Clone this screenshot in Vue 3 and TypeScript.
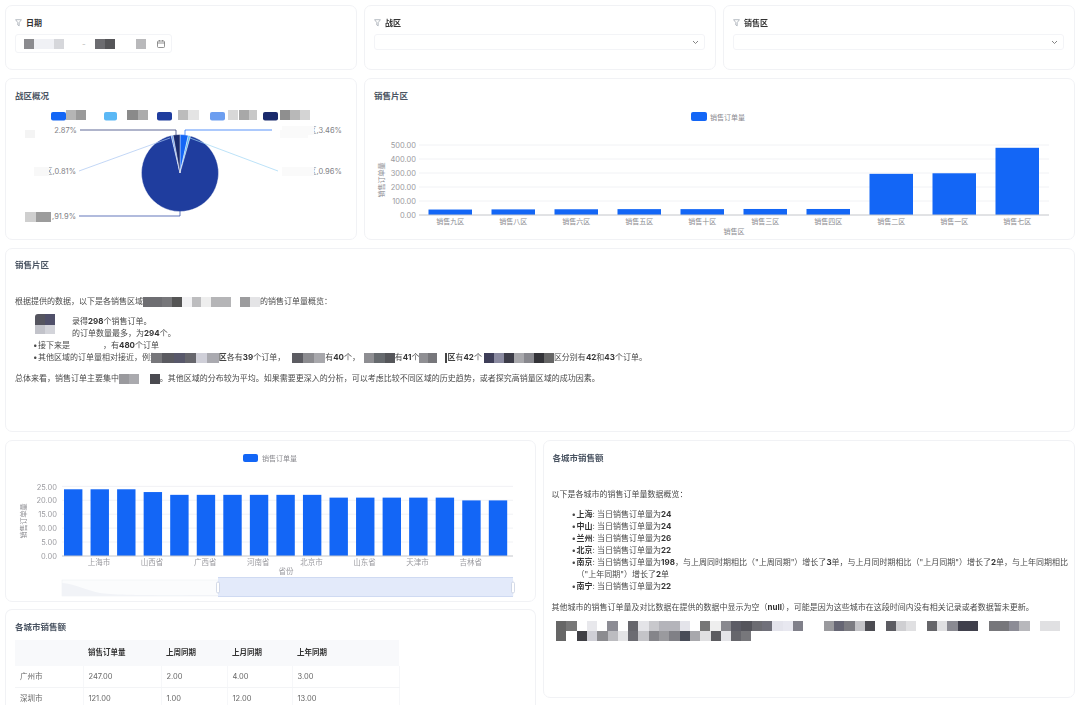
<script setup lang="ts">
const blue = '#1366f6'
const band = (colors: string[], cell: number) => {
  const stops = colors.map((c, i) => `${c} ${i * cell}px ${(i + 1) * cell}px`).join(',')
  return { width: `${colors.length * cell}px`, background: `linear-gradient(90deg,${stops})` }
}

const areaBars = [39, 40, 41, 42, 42, 43, 43, 294, 298, 480].map((v, i) => ({
  x: 428.5 + i * 63,
  h: (v / 500) * 70,
  label: ['销售九区', '销售八区', '销售六区', '销售五区', '销售十区', '销售三区', '销售四区', '销售二区', '销售一区', '销售七区'][i],
}))
const areaTicks = ['0.00', '100.00', '200.00', '300.00', '400.00', '500.00']
const cityBars = [24, 24, 24, 23, 22, 22, 22, 22, 22, 22, 21, 21, 21, 21, 21, 20, 20].map((v, i) => ({
  x: 64 + i * 26.55,
  h: (v / 25) * 69.5,
}))
const cityTicks = ['0.00', '5.00', '10.00', '15.00', '20.00', '25.00']
const cityLabels = ['上海市', '山西省', '广西省', '河南省', '北京市', '山东省', '天津市', '吉林省']

const cx = 180
const cy = 173
const r = 38.5
const pt = (deg: number) => {
  const a = (deg * Math.PI) / 180
  return `${(cx + r * Math.sin(a)).toFixed(2)} ${(cy - r * Math.cos(a)).toFixed(2)}`
}
const slices = (() => {
  const data = [
    [3.46, blue],
    [0.96, '#5bb8f5'],
    [91.9, '#1f3d9e'],
    [0.81, '#6c9ef0'],
    [2.87, '#1a2a6c'],
  ] as [number, string][]
  let start = 0
  return data.map(([v, fill]) => {
    const sweep = (v / 100) * 360
    const d = `M${cx} ${cy}L${pt(start)}A${r} ${r} 0 ${sweep > 180 ? 1 : 0} 1 ${pt(start + sweep)}Z`
    start += sweep
    return { d, fill }
  })
})()

const legend = [
  { x: 51, w: 15, fill: blue },
  { x: 104, w: 13, fill: '#5bb8f5' },
  { x: 157, w: 15, fill: '#1f3d9e' },
  { x: 210, w: 15, fill: '#6c9ef0' },
  { x: 263, w: 15, fill: '#1a2a6c' },
]
const legendBlur = [
  { x: 66, w: 10, fill: '#b5b5b5' }, { x: 76, w: 10, fill: '#9a9a9a' },
  { x: 127, w: 11, fill: '#8a8a8a' }, { x: 138, w: 10, fill: '#acacac' },
  { x: 178, w: 10, fill: '#bcbcbc' }, { x: 188, w: 11, fill: '#e4e4e4' },
  { x: 228, w: 10, fill: '#d8d8d8' }, { x: 239, w: 10, fill: '#a8a8a8' }, { x: 249, w: 8, fill: '#c8c8c8' },
  { x: 280, w: 10, fill: '#8f8f8f' }, { x: 290, w: 10, fill: '#b8b8b8' }, { x: 300, w: 10, fill: '#d4d4d4' },
]

const rows = [
  ['广州市', '247.00', '2.00', '4.00', '3.00'],
  ['深圳市', '121.00', '1.00', '12.00', '13.00'],
]
const cities = [
  ['上海', '24'],
  ['中山', '24'],
  ['兰州', '26'],
  ['北京', '22'],
]
</script>

<template>
  <div class="page">
    <section class="card filter">
      <div class="fhead">
        <svg width="7" height="8" viewBox="0 0 7 8"><path d="M.6.7h5.8L4.2 3.6v3.2L2.8 6V3.6z" fill="none" stroke="#9aa0aa" stroke-width=".7" /></svg>
        <b>日期</b>
      </div>
      <div class="date">
        <span class="mos" :style="band(['#8b8b8f', '#f0f1f5', '#f0f1f5', '#d6d7db'], 10)"></span>
        <span class="dash">-</span>
        <span class="mos" :style="band(['#6c6c70', '#555558'], 10)"></span>
        <span class="mos far" :style="band(['#b9b9bb'], 10)"></span>
        <svg class="cal" width="8" height="8" viewBox="0 0 8 8"><rect x=".5" y="1" width="7" height="6.5" rx="1" fill="none" stroke="#777" stroke-width=".8" /><path d="M.5 3h7M2.4 0v1.4M5.6 0v1.4" stroke="#777" stroke-width=".8" /></svg>
      </div>
    </section>
    <section class="card filter">
      <div class="fhead">
        <svg width="7" height="8" viewBox="0 0 7 8"><path d="M.6.7h5.8L4.2 3.6v3.2L2.8 6V3.6z" fill="none" stroke="#9aa0aa" stroke-width=".7" /></svg>
        <b>战区</b>
      </div>
      <div class="select">
        <svg width="7" height="5" viewBox="0 0 7 5"><path d="M1 1l2.5 2.5L6 1" fill="none" stroke="#777" stroke-width=".9" /></svg>
      </div>
    </section>
    <section class="card filter">
      <div class="fhead">
        <svg width="7" height="8" viewBox="0 0 7 8"><path d="M.6.7h5.8L4.2 3.6v3.2L2.8 6V3.6z" fill="none" stroke="#9aa0aa" stroke-width=".7" /></svg>
        <b>销售区</b>
      </div>
      <div class="select">
        <svg width="7" height="5" viewBox="0 0 7 5"><path d="M1 1l2.5 2.5L6 1" fill="none" stroke="#777" stroke-width=".9" /></svg>
      </div>
    </section>

    <section class="card chart-row">
      <h3 class="title">战区概况</h3>
      <svg class="plot" width="350" height="137" viewBox="6 102 350 137">
        <rect v-for="l in legend" :key="l.x" :x="l.x" y="112" :width="l.w" height="8.5" rx="2" :fill="l.fill" />
        <rect v-for="l in legendBlur" :key="l.x" :x="l.x" y="110" :width="l.w" height="10" :fill="l.fill" />
        <path v-for="s in slices" :key="s.fill" :d="s.d" :fill="s.fill" stroke="#fff" stroke-width=".4" />
        <path d="M80 130H176V135" fill="none" stroke="#1a2a6c" stroke-width=".7" />
        <path d="M272 130H185V135" fill="none" stroke="#1366f6" stroke-width=".7" />
        <path d="M79 171L170 138" fill="none" stroke="#a9c6f2" stroke-width=".7" />
        <path d="M278 171L190 138" fill="none" stroke="#9fd6f5" stroke-width=".7" />
        <path d="M79 216H180V211" fill="none" stroke="#1f3d9e" stroke-width=".7" />
        <rect x="25" y="212" width="11" height="10" fill="#cfcfcf" /><rect x="36" y="212" width="15" height="10" fill="#9c9c9c" />
        <rect x="25" y="130" width="10" height="8" fill="#f4f4f4" /><rect x="280" y="130" width="28" height="8" fill="#fafafa" />
        <text x="77" y="133" class="pl end">2.87%</text>
        <text x="76" y="174" class="pl end">区,0.81%</text>
        <text x="76" y="219" class="pl end">,91.9%</text>
        <text x="309" y="133" class="pl">区,3.46%</text>
        <text x="309" y="174" class="pl">区,0.96%</text>
        <rect x="34" y="167" width="15" height="9" fill="#f8f8f8" />
        <rect x="282" y="126" width="32" height="9" fill="#fafafa" />
        <rect x="282" y="167" width="32" height="9" fill="#fafafa" />
      </svg>
    </section>

    <section class="card chart-row wide">
      <h3 class="title">销售片区</h3>
      <svg class="plot" width="709" height="137" viewBox="365 102 709 137">
        <rect x="691" y="112" width="16" height="9" rx="2" :fill="blue" />
        <text x="710" y="119.5" class="ax">销售订单量</text>
        <line v-for="(t, i) in areaTicks.slice(1)" :key="t" x1="419" x2="1049" :y1="201 - i * 14" :y2="201 - i * 14" stroke="#edeff2" stroke-width=".8" />
        <text v-for="(t, i) in areaTicks" :key="t" x="416" :y="218 - i * 14" class="tk end">{{ t }}</text>
        <text class="ax mid" transform="translate(384 180) rotate(-90)">销售订单量</text>
        <rect v-for="b in areaBars" :key="b.x" :x="b.x" :y="215 - b.h" width="43.5" :height="b.h" :fill="blue" />
        <line x1="419" x2="1049" y1="215" y2="215" stroke="#c4c6cb" />
        <text v-for="b in areaBars" :key="b.label" :x="b.x + 21.7" y="224" class="ax mid">{{ b.label }}</text>
        <text x="734" y="234" class="ax mid">销售区</text>
      </svg>
    </section>

    <section class="card summary">
      <h3 class="title">销售片区</h3>
      <p class="first">根据提供的数据，以下是各销售区域<span class="mos" :style="band(['#6e6e72', '#6e6e72', '#77777a', '#555', '#f2f2f4', '#bdbdbf', '#eee', '#b5b5b7', '#b5b5b7', '#fff', '#9c9c9e', '#e4e4e6'], 9.75)"></span>的销售订单量概览：</p>
      <ul class="list">
        <li class="skip">录得<b>298</b>个销售订单。</li>
        <li class="skip">的订单数量最多，为<b>294</b>个。</li>
        <li class="dot">接下来是<span class="gap"></span>，有<b>480</b>个订单</li>
        <li class="dot">其他区域的订单量相对接近，例如<span class="mos back7" :style="band(['#77777b', '#5a5a60', '#58586a', '#66666c', '#cfcfd8', '#aaaab0'], 11.3)"></span><b class="pl-b">区</b>各有<b>39</b>个订单，<span class="mos ml7" :style="band(['#5c5c62', '#8c8c90', '#a8a8ac'], 11)"></span>有<b>40</b>个，<span class="mos ml4" :style="band(['#8e8e92', '#666a6e', '#55565a'], 10.3)"></span>有<b>41</b>个<span class="mos" :style="band(['#8f8f93', '#77777b'], 9)"></span><span class="mos ml8 thin"></span><b class="pl-b">区</b>有<b>42</b>个<span class="mos ml2" :style="band(['#3e3e58', '#8a8aa0', '#3c3c48', '#a8a8ac', '#88888e', '#333338', '#666'], 10)"></span>区分别有<b>42</b>和<b>43</b>个订单。</li>
        <li class="block" aria-hidden="true"></li>
      </ul>
      <p class="last">总体来看，销售订单主要集中<span class="mos" :style="band(['#9a9a9e', '#aaaaae', '#fff', '#4a4a50'], 10.2)"></span>。其他区域的分布较为平均。如果需要更深入的分析，可以考虑比较不同区域的历史趋势，或者探究高销量区域的成功因素。</p>
    </section>

    <div class="bottom">
      <div class="leftcol">
        <section class="card city">
          <svg class="plot" width="529" height="160" viewBox="6 442 529 160">
            <rect x="243" y="455" width="15" height="8" rx="2" :fill="blue" />
            <text x="262" y="462" class="ax">销售订单量</text>
            <line v-for="(t, i) in cityTicks.slice(1)" :key="t" x1="62" x2="513" :y1="543 - i * 13.9" :y2="543 - i * 13.9" stroke="#edeff2" stroke-width=".8" />
            <text v-for="(t, i) in cityTicks" :key="t" x="57" :y="560 - i * 13.9" class="tk end">{{ t }}</text>
            <text class="ax mid" transform="translate(26 522) rotate(-90)">销售订单量</text>
            <rect v-for="b in cityBars" :key="b.x" :x="b.x" :y="557 - b.h" width="18.4" :height="b.h" :fill="blue" />
            <line x1="62" x2="513" y1="557" y2="557" stroke="#c4c6cb" />
            <text v-for="(c, i) in cityLabels" :key="c" :x="99 + i * 53.1" y="566" class="ax mid big">{{ c }}</text>
            <text x="286" y="575" class="ax mid big">省份</text>
            <rect x="62" y="581" width="451" height="16" fill="#fbfcfd" stroke="#eef0f4" stroke-width=".6" />
            <path d="M62 584C75 585 85 591 100 594S190 596 218 596V597H62Z" fill="#f1f3f7" />
            <rect x="218" y="578" width="295" height="20" fill="#e3eafa" />
            <line x1="218" x2="513" y1="578.5" y2="578.5" stroke="#cfdaf2" />
            <line x1="218" x2="513" y1="597.5" y2="597.5" stroke="#cfdaf2" />
            <rect x="216.5" y="583" width="3" height="11" rx="1.5" fill="#fff" stroke="#b9c3d8" stroke-width=".6" />
            <rect x="511.5" y="583" width="3" height="11" rx="1.5" fill="#fff" stroke="#b9c3d8" stroke-width=".6" />
          </svg>
        </section>
        <section class="card tablecard">
          <h3 class="title">各城市销售额</h3>
          <table>
            <colgroup><col class="c1" /><col class="c2" /><col class="c3" /><col class="c4" /><col class="c5" /></colgroup>
            <thead><tr><th></th><th>销售订单量</th><th>上周同期</th><th>上月同期</th><th>上年同期</th></tr></thead>
            <tbody><tr v-for="row in rows" :key="row[0]"><td v-for="c in row" :key="c">{{ c }}</td></tr></tbody>
          </table>
        </section>
      </div>
      <section class="card report">
        <h3 class="title">各城市销售额</h3>
        <p class="first">以下是各城市的销售订单量数据概览：</p>
        <ul class="list cities">
          <li v-for="c in cities" :key="c[0]" class="dot"><b>{{ c[0] }}</b>: 当日销售订单量为<b>{{ c[1] }}</b></li>
          <li class="dot"><b>南京</b>: 当日销售订单量为<b>198</b>，与上周同时期相比（"上周同期"）增长了<b>3</b>单，与上月同时期相比（"上月同期"）增长了<b>2</b>单，与上年同期相比</li>
          <li class="cont">（"上年同期"）增长了<b>2</b>单</li>
          <li class="dot"><b>南宁</b>: 当日销售订单量为<b>22</b></li>
        </ul>
        <p class="last">其他城市的销售订单量及对比数据在提供的数据中显示为空（<b>null</b>），可能是因为这些城市在这段时间内没有相关记录或者数据暂未更新。</p>
        <div class="mosaic">
          <span class="strip" :style="band(['#666','#777','#fff','#e8e8ec','#fff','#8c8c94','#fff','#66666c','#e4e4e8','#c8c8cc','#b4b4ba','#b4b4ba','#e4e4ea','#fff','#777','#eee','#88888e','#5c5c66','#55555c','#6c6c72','#70707a','#e4e4ec','#e8e8f0','#80808a','#fff','#fff','#9a9a9e','#666674','#7c7c82','#c4c4c8','#4c4c52','#fff','#5c5c62','#cfcfd2','#e0e0e2','#fff','#66666a','#e0e0e2','#8a8a92','#40404c','#40404c','#fff','#77777b','#77777b','#8c8c96','#b8b8bc','#fff','#e0e0e2','#e0e0e2'], 10.3)"></span>
          <span class="strip" :style="band(['#666','#fff','#3f3f44','#cfcfd6','#8c8c90','#bcbcc0','#e4e4e6','#6c6c72','#c4c4c8','#85858a','#9a9a9e','#808086','#484c58','#a8a8ac','#e0e0e2','#5c5c60','#e4e4e8','#66666c','#77777b'], 10.3)"></span>
        </div>
      </section>
    </div>
  </div>
</template>

<style>
html, body { margin: 0; height: 705px; overflow: hidden; background: #fff; }
</style>

<style scoped>
.page {
  width: 1080px;
  box-sizing: border-box;
  padding: 5px 5px 0;
  display: grid;
  grid-template-columns: repeat(3, 1fr);
  grid-template-rows: 65px 162px 184px auto;
  gap: 8px 7px;
  font-family: Inter, "Noto Sans CJK SC", sans-serif;
  font-size: 8px;
  line-height: 12px;
  color: #4a4a4a;
  filter: blur(0.35px);
}
.card { background: #fff; border: 1px solid #f1f2f5; border-radius: 7px; box-sizing: border-box; overflow: hidden; }
.fhead { display: flex; align-items: center; gap: 4px; height: 10px; margin: 12px 0 0 9px; color: #4b5563; font-size: 8px; }
.date {
  display: flex; align-items: center; width: 157px; height: 19px; box-sizing: border-box;
  margin: 6px 0 0 9px; padding-left: 8px; border: 1px solid #f3f4f7; border-radius: 3px;
}
.date .dash { margin: 0 9px 0 18px; color: #bbb; }
.date .far { margin-left: 21px; }
.date .cal { margin-left: 11px; }
.select {
  display: flex; align-items: center; justify-content: flex-end; height: 16px; box-sizing: border-box;
  margin: 6px 10px 0 9px; padding-right: 5px; border: 1px solid #f3f4f7; border-radius: 3px;
}
.title { margin: 11px 0 0 9px; height: 12px; font-size: 8.5px; line-height: 12px; font-weight: 700; color: #4b5563; }
.chart-row.wide { grid-column: span 2; }
.plot { display: block; }
.tk { font-size: 7.5px; fill: #9b9ba0; }
.ax { font-size: 7px; fill: #8a8a8f; }
.ax.big { font-size: 7.5px; fill: #9b9ba0; }
.pl { font-size: 7.5px; fill: #808085; }
.mid { text-anchor: middle; }
.end { text-anchor: end; }
.summary { grid-column: span 3; }
.summary > .title { margin-top: 10px; }
.first { margin: 24px 0 0 9px; }
.list { position: relative; list-style: none; margin: 8px 0 0 27px; padding: 0; }
.list li { min-height: 12px; white-space: nowrap; }
.dot::before { content: "•"; display: inline-block; width: 5px; }
.cont { padding-left: 5px; }
.skip { padding-left: 39px; }
.gap { display: inline-block; width: 33px; }
.last { margin: 9px 0 0 9px; white-space: nowrap; }
b { color: #333; font-weight: 700; }
.pl-b { color: #444; }
.mos { display: inline-block; height: 10px; vertical-align: middle; }
.back7 { margin-left: -7px; }
.ml2 { margin-left: 2px; }
.ml4 { margin-left: 4px; }
.ml7 { margin-left: 7px; }
.ml8 { margin-left: 8px; }
.thin { width: 2px; background: #444; }
.list .block {
  position: absolute; left: 1.5px; top: -1px; width: 20px; height: 20px; min-height: 0; border-radius: 3px 0 0 0;
  background:
    linear-gradient(90deg, #55555f 0 50%, #50506a 50%) top / 100% 55% no-repeat,
    linear-gradient(90deg, #c2c3ca 0 50%, #d3d4da 50%) bottom / 100% 45% no-repeat;
}
.bottom { grid-column: span 3; display: flex; gap: 7px; }
.leftcol { flex: 1; display: flex; flex-direction: column; gap: 7px; min-width: 0; }
.city { height: 162px; }
.tablecard { height: 110px; border-bottom: 0; border-radius: 7px 7px 0 0; }
.tablecard .title { margin-bottom: 7px; }
table { border-collapse: collapse; table-layout: fixed; width: 384px; margin-left: 9px; font-size: 7.5px; }
.c1 { width: 68px; } .c2 { width: 78px; } .c3 { width: 66px; } .c4 { width: 65px; } .c5 { width: 107px; }
th { height: 26px; padding: 0 0 0 5px; text-align: left; background: #f8f9fb; color: #333; font-weight: 700; }
td { height: 21px; padding: 0 0 0 5px; border-bottom: 1px solid #f3f4f6; border-right: 1px solid #f6f7f9; color: #666; }
.report { flex: 1; height: 258px; min-width: 0; }
.report .first { margin-top: 24px; margin-left: 8px; }
.report .last { margin-left: 8px; white-space: nowrap; }
.cities { margin-left: 28px; margin-right: 4px; }
.mosaic { margin: 8px 0 0 12px; }
.strip { display: block; height: 10px; }
</style>
